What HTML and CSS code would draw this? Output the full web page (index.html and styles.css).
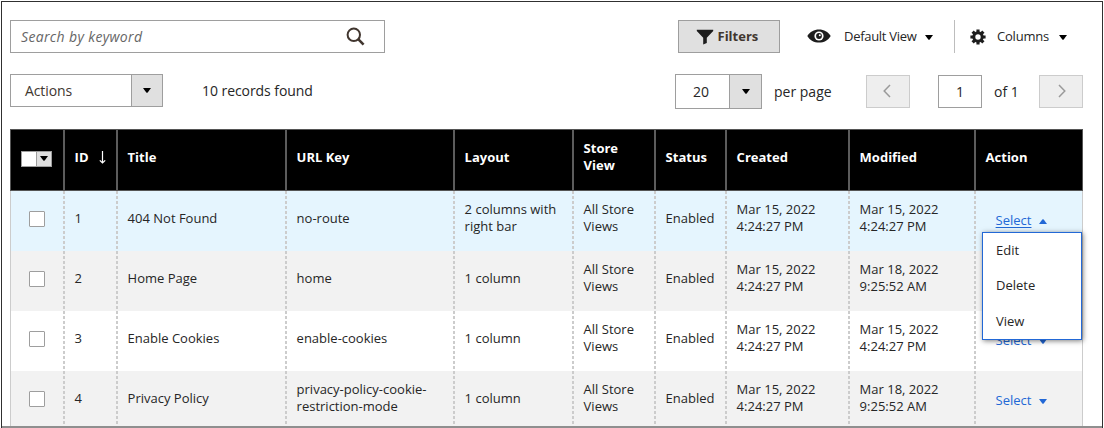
FILE: index.html
```html
<!DOCTYPE html>
<html lang="en">
<head>
<meta charset="utf-8">
<title>Pages</title>
<link rel="stylesheet" href="styles.css">
</head>
<body>
<svg width="0" height="0" class="defs">
  <symbol id="down" viewBox="0 0 8 5"><path d="M0 0H8L4.7 4.5Q4 5.2 3.3 4.5Z"/></symbol>
</svg>
<main class="frame">
  <div class="bar bar-top">
    <div class="search"><span class="t-search">Search by keyword</span>
      <svg class="i-search" width="20" height="20" viewBox="0 0 20 20" fill="none" stroke="#41362f" stroke-width="2"><circle cx="7.8" cy="7.8" r="6.2"/><path d="M12.2 12.2L17.6 17.6" stroke-width="2.6"/></svg>
    </div>
    <div class="filters">
      <svg width="18" height="16" viewBox="0 0 18 16" fill="#1d1d1d"><path d="M0.8 0.8H17.2V2L10.8 8.7V14L7.2 15.5V8.7L0.8 2Z"/></svg>
      <span class="t-filters">Filters</span>
    </div>
    <div class="view">
      <svg class="eye" width="24" height="14" viewBox="0 0 24 14"><path d="M0.3 7C3 2.6 7 .4 12 .4S21 2.6 23.7 7C21 11.4 17 13.6 12 13.6S3 11.4.3 7Z" fill="#1d1d1d"/><circle cx="12" cy="7" r="4.6" fill="#fff"/><circle cx="12" cy="7" r="2.9" fill="#1d1d1d"/><circle cx="12.8" cy="6.2" r="1" fill="#fff"/></svg>
      <span class="t-view">Default View</span><svg class="caret"><use href="#down"/></svg>
    </div>
    <div class="columns">
      <svg width="16" height="16" viewBox="-8 -8 16 16"><g fill="#1d1d1d"><path id="tooth" d="M-1.6-7.6H1.6L1.5-4H-1.5Z"/><use href="#tooth" transform="rotate(45)"/><use href="#tooth" transform="rotate(90)"/><use href="#tooth" transform="rotate(135)"/><use href="#tooth" transform="rotate(180)"/><use href="#tooth" transform="rotate(225)"/><use href="#tooth" transform="rotate(270)"/><use href="#tooth" transform="rotate(315)"/></g><circle r="4.2" fill="none" stroke="#1d1d1d" stroke-width="3"/></svg>
      <span class="t-cols">Columns</span><svg class="caret"><use href="#down"/></svg>
    </div>
  </div>
  <div class="bar bar-low">
    <div class="actions"><span class="t-actions">Actions</span><i class="drop"><svg class="caret"><use href="#down"/></svg></i></div>
    <div class="records"><span class="t-rec">10 records found</span></div>
    <div class="size"><span class="t-size">20</span><i class="drop"><svg class="caret"><use href="#down"/></svg></i></div>
    <div class="per"><span class="t-per">per page</span></div>
    <div class="page-btn"><svg width="8" height="14" viewBox="0 0 8 14"><path d="M7 1L1.2 7L7 13"/></svg></div>
    <div class="page-no"><span>1</span></div>
    <div class="of"><span class="t-of">of 1</span></div>
    <div class="page-btn"><svg width="8" height="14" viewBox="0 0 8 14"><path d="M1 1L6.8 7L1 13"/></svg></div>
  </div>
  <div class="table">
    <div class="row head">
      <div class="cell pick"><span class="multi"><b></b><i><svg class="caret"><use href="#down"/></svg></i></span></div>
      <div class="cell id">ID<svg width="7" height="13" viewBox="0 0 7 13" fill="none" stroke="#fff" stroke-width="1.2"><path d="M3.5 0V11.5M.8 9.3L3.5 12L6.2 9.3"/></svg></div>
      <div class="cell">Title</div><div class="cell">URL Key</div><div class="cell">Layout</div><div class="cell two">Store<br>View</div><div class="cell">Status</div><div class="cell">Created</div><div class="cell">Modified</div><div class="cell">Action</div>
    </div>
    <div class="row active">
      <div class="cell pick"><b class="check"></b></div><div class="cell">1</div><div class="cell">404 Not Found</div><div class="cell">no-route</div><div class="cell two">2 columns with<br>right bar</div><div class="cell two">All Store<br>Views</div><div class="cell">Enabled</div><div class="cell two">Mar 15, 2022<br>4:24:27 PM</div><div class="cell two">Mar 15, 2022<br>4:24:27 PM</div>
      <div class="cell act"><a>Select</a><svg class="caret up"><use href="#down"/></svg>
        <div class="menu"><span>Edit</span><span>Delete</span><span>View</span></div>
      </div>
    </div>
    <div class="row even">
      <div class="cell pick"><b class="check"></b></div><div class="cell">2</div><div class="cell">Home Page</div><div class="cell">home</div><div class="cell">1 column</div><div class="cell two">All Store<br>Views</div><div class="cell">Enabled</div><div class="cell two">Mar 15, 2022<br>4:24:27 PM</div><div class="cell two">Mar 18, 2022<br>9:25:52 AM</div><div class="cell act"></div>
    </div>
    <div class="row">
      <div class="cell pick"><b class="check"></b></div><div class="cell">3</div><div class="cell">Enable Cookies</div><div class="cell">enable-cookies</div><div class="cell">1 column</div><div class="cell two">All Store<br>Views</div><div class="cell">Enabled</div><div class="cell two">Mar 15, 2022<br>4:24:27 PM</div><div class="cell two">Mar 15, 2022<br>4:24:27 PM</div><div class="cell act"><a>Select</a><svg class="caret"><use href="#down"/></svg></div>
    </div>
    <div class="row even">
      <div class="cell pick"><b class="check"></b></div><div class="cell">4</div><div class="cell">Privacy Policy</div><div class="cell two">privacy-policy-cookie-<br>restriction-mode</div><div class="cell">1 column</div><div class="cell two">All Store<br>Views</div><div class="cell">Enabled</div><div class="cell two">Mar 15, 2022<br>4:24:27 PM</div><div class="cell two">Mar 18, 2022<br>9:25:52 AM</div><div class="cell act"><a>Select</a><svg class="caret"><use href="#down"/></svg></div>
    </div>
  </div>
</main>
</body>
</html>
```
FILE: styles.css
```css
* { box-sizing: border-box; }
body { margin: 0; background: #fff; font: 13px/17.5px "Open Sans", sans-serif; color: #262626; }
.defs { position: absolute; }
svg { display: block; flex: none; }
i { font-style: normal; }
.frame { position: relative; width: 1102px; height: 427px; margin: 1px 0 0 1px; overflow: hidden; border: 1px solid #303030; border-bottom: 0; padding: 18px 0 0 8px; }
.frame::after { content: ""; position: absolute; left: -1px; right: -1px; bottom: 0; height: 2px; background: #8f8f8f; }
.bar { display: flex; width: 1073px; white-space: nowrap; }
.bar > div { display: flex; align-items: center; flex: none; }
.bar-top { height: 33px; }
.caret { width: 8px; height: 5px; fill: #000; }
.search { width: 375px; border: 1px solid #9e9e9e; padding-left: 10px; font-style: italic; font-size: 14px; letter-spacing: .35px; color: #666; }
.i-search { margin-left: auto; margin-right: 18px; margin-top: 1px; }
.filters { width: 102px; margin-left: 293px; border: 1px solid #9e9e9e; background: #e0e0e0; padding-left: 17px; gap: 4px; font-weight: 700; color: #41362f; }
.filters span { margin-left: -.5px; }
.view { width: 147px; padding-left: 27px; }
.eye { margin-top: -2px; }
.t-view { margin-left: 13px; letter-spacing: -.3px; }
.view .caret { margin: 2px 0 0 9px; }
.columns { border-left: 1px solid #bdbdbd; margin-left: 27px; padding-left: 15px; }
.t-cols { margin-left: 11px; letter-spacing: -.2px; }
.columns .caret { margin: 2px 0 0 10px; }
.bar-low { margin-top: 21px; height: 35px; font-size: 14px; align-items: flex-start; }
.actions { width: 153px; height: 33px; border: 1px solid #9e9e9e; padding-left: 14px; color: #41362f; }
.t-actions { margin-top: 1px; letter-spacing: -.1px; }
.drop { display: flex; align-items: center; justify-content: center; align-self: stretch; width: 31px; border-left: 1px solid #9e9e9e; background: #e0e0e0; margin-left: auto; }
.records { height: 33px; margin-left: 39px; width: 116px; letter-spacing: -.06px; }
.size { width: 87px; height: 35px; border: 1px solid #9e9e9e; margin-left: 357px; padding-left: 17px; }
.size .drop { width: 32px; }
.per { height: 35px; width: 57px; margin-left: 12px; }
.page-btn { width: 44px; height: 33px; margin: 1px 0 0 35px; border: 1px solid #ccc; background: #eee; justify-content: center; }
.page-btn svg { margin: -2px 3px 0 0; }
.page-btn path { fill: none; stroke: #9a9a9a; stroke-width: 1.5; }
.page-no { width: 44px; height: 33px; margin: 1px 0 0 28px; border: 1px solid #9e9e9e; justify-content: center; }
.of { height: 35px; width: 57px; padding-left: 12px; }
.of + .page-btn { margin-left: 0; }
.of + .page-btn svg { margin-right: -1px; }
.table { margin-top: 20px; width: 1073px; }
.row { display: grid; grid-template-columns: 55px 53px 169px 168px 119px 82px 71px 123px 126px 107px; height: 60px; }
.cell { display: flex; align-items: center; padding: 0 0 4px 9.6px; white-space: nowrap; background: repeating-linear-gradient(#ccc 0 3px, transparent 3px 5px) right / 2px 100% no-repeat; }
.two { padding-bottom: 6px; }
.cell:first-child { border-left: 1px solid #ccc; }
.cell:last-child { background: none; border-right: 1px solid #ccc; }
.active { background: #e5f5fe; }
.even { background: #f2f2f2; }
.head { height: 62px; background: #000; color: #fff; font-weight: 700; border: 1px solid #555; grid-template-columns: 54px 53px 169px 168px 119px 82px 71px 123px 126px 106px; }
.head .cell { background: linear-gradient(#5c5c5c, #5c5c5c) right / 2px 100% no-repeat; }
.head .cell:first-child { border: 0; }
.head .cell:last-child { border: 0; background: none; }
.id svg { margin: -1px 0 0 10px; }
.cell.pick { padding: 0 0 4px 18px; }
.check { width: 16px; height: 16px; background: #fff; border: 1px solid #9e9e9e; border-radius: 1px; }
.head .cell.pick { padding: 0 0 3px 10px; }
.multi { display: flex; width: 31px; height: 16px; border: 1px solid #9e9e9e; background: #fff; }
.multi b { width: 14px; }
.multi i { display: flex; flex: 1; align-items: center; justify-content: center; border-left: 1px solid #9e9e9e; background: #e0e0e0; }
.cell.act { position: relative; padding: 0 0 0 19.6px; color: #2268d6; }
.act .caret { margin-left: 7.4px; fill: #2268d6; }
.active a { text-decoration: underline; text-underline-offset: 2px; }
.up { transform: rotate(180deg); }
.menu { position: absolute; z-index: 2; left: 6px; top: 41px; width: 100px; height: 108px; border: 1px solid #2268d6; background: #fff; color: #262626; box-shadow: 1px 1px 5px rgba(0,0,0,.5); padding: 0 0 0 13px; display: grid; grid-template-rows: 35px 35px 37px; align-items: center; }
```
